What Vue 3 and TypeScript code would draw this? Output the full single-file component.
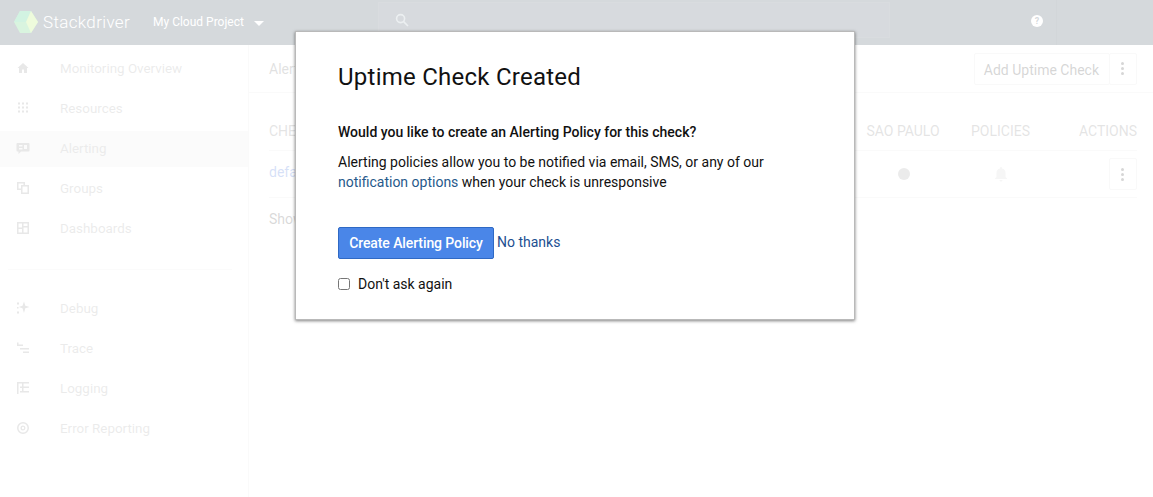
<script setup lang="ts">
import { ref } from 'vue';

const dontAsk = ref(false);

const topNav = [
  { label: 'Monitoring Overview', icon: 'home' },
  { label: 'Resources', icon: 'grid' },
  { label: 'Alerting', icon: 'alert', active: true },
  { label: 'Groups', icon: 'groups' },
  { label: 'Dashboards', icon: 'dash' },
];

const bottomNav = [
  { label: 'Debug', icon: 'debug' },
  { label: 'Trace', icon: 'trace' },
  { label: 'Logging', icon: 'logging' },
  { label: 'Error Reporting', icon: 'error' },
];
</script>

<template>
  <div class="app">
    <header class="topbar">
      <div class="brand">
        <svg class="logo" width="26" height="24" viewBox="0 0 26 24">
          <path d="M7 1h11l7 11-7 11H7L1 12z" fill="#40c860" />
          <path d="M7 1h11L13 12H1z" fill="#20c070" />
          <path d="M18 1l7 11-7 11-5-11z" fill="#a8e850" />
        </svg>
        <span class="brand-name">Stackdriver</span>
      </div>
      <div class="project">
        <span>My Cloud Project</span>
        <i class="caret"></i>
      </div>
      <div class="search">
        <svg width="14" height="14" viewBox="0 0 14 14" fill="none" stroke="#9fb0bb" stroke-width="1.6">
          <circle cx="5.6" cy="5.6" r="4" />
          <path d="M8.6 8.6L13 13" />
        </svg>
      </div>
      <div class="help">?</div>
      <div class="top-sep"></div>
    </header>

    <div class="body">
      <nav class="sidebar">
        <a
          v-for="item in topNav"
          :key="item.label"
          class="nav-item"
          :class="{ active: item.active }"
        >
          <svg class="nav-icon" width="14" height="14" viewBox="0 0 14 14" fill="#8a8a8a">
            <path v-if="item.icon === 'home'" d="M7 2L1.500 7H3v5h3V8.500h2V12h3V7h1.500z" />
            <path v-else-if="item.icon === 'grid'" d="M2 1.500h2v2H2zM6 1.500h2v2H6zM10 1.500h2v2h-2zM2 5.500h2v2H2zM6 5.500h2v2H6zM10 5.500h2v2h-2zM2 9.500h2v2H2zM6 9.500h2v2H6zM10 9.500h2v2h-2z" />
            <path v-else-if="item.icon === 'alert'" d="M1.500 2h11a1 1 0 0 1 1 1v6.500a1 1 0 0 1-1 1H5L2.500 13v-2.500h-1a1 1 0 0 1-1-1V3a1 1 0 0 1 1-1zM3 4v1.500h3.500V4zm5 0v4h3V4zM3 7v1.500h3.500V7z" fill-rule="evenodd" />
            <path v-else-if="item.icon === 'groups'" d="M1 1h8v3h4v9H5V9H1zm1.500 1.500v5H5V4h2.500V2.500zM6.500 5.500v6h5v-6z" fill-rule="evenodd" />
            <path v-else-if="item.icon === 'dash'" d="M1 1h12v12H1zm1.500 1.500v4h3.500v-4zm5 0v2.500h4V2.500zm0 4v5h4v-5zm-5 1.500v3.500h3.500V8z" fill-rule="evenodd" />
          </svg>
          <span>{{ item.label }}</span>
        </a>
        <div class="nav-divider"></div>
        <a v-for="item in bottomNav" :key="item.label" class="nav-item">
          <svg class="nav-icon" width="14" height="14" viewBox="0 0 14 14" fill="#8a8a8a">
            <path v-if="item.icon === 'debug'" d="M8 .5l1.300 4.200L13.500 6 9.300 7.300 8 12 6.500 7.300 2.800 6l3.700-1.300zM1 1.500h2v2H1zM1 6h1.500v1.500H1zM1 10.500h2v2H1z" />
            <path v-else-if="item.icon === 'trace'" d="M1 1.500h1.500V5H1zM1 3.500h6V5H1zM4 7h9v1.500H4zM7 10.500h6V12H7z" />
            <path v-else-if="item.icon === 'logging'" d="M1 1h12v1.500H1zM1 1h1.500v12H1zM4 5.500h9V7H4zM4 10h9v1.500H4zM6 2h1.500v9H6z" />
            <path v-else d="M7 1a6 6 0 1 0 0 12A6 6 0 0 0 7 1zm0 1.500a4.500 4.500 0 1 1 0 9 4.500 4.500 0 0 1 0-9zM7 4.500a2.500 2.500 0 1 0 0 5 2.500 2.500 0 0 0 0-5zm0 1.300a1.200 1.200 0 1 1 0 2.400 1.200 1.200 0 0 1 0-2.400z" fill-rule="evenodd" />
          </svg>
          <span>{{ item.label }}</span>
        </a>
      </nav>

      <main class="content">
        <div class="toolbar">
          <span class="crumb">Alerting</span>
          <div class="toolbar-actions">
            <button class="btn add">Add Uptime Check</button>
            <button class="btn kebab"><i></i><i></i><i></i></button>
          </div>
        </div>

        <div class="table">
          <div class="row head">
            <span class="cell-name">CHECK</span>
            <span class="cell-region">SAO PAULO</span>
            <span class="cell-policy">POLICIES</span>
            <span class="cell-actions">ACTIONS</span>
          </div>
          <div class="row data">
            <a class="cell-name link">default</a>
            <span class="cell-region"><i class="dot"></i></span>
            <span class="cell-policy">
              <svg width="14" height="16" viewBox="0 0 14 16" fill="#cfcfcf">
                <path d="M7 1a1 1 0 0 1 1 1v.600A4.500 4.500 0 0 1 11.500 7v4l1.500 1.500v.500H1v-.500L2.500 11V7A4.500 4.500 0 0 1 6 2.600V2a1 1 0 0 1 1-1zM5.500 14h3a1.500 1.500 0 0 1-3 0z" />
              </svg>
            </span>
            <span class="cell-actions">
              <button class="btn kebab"><i></i><i></i><i></i></button>
            </span>
          </div>
        </div>
        <p class="showing">Showing 1 of 1</p>
      </main>
    </div>

    <div class="overlay">
      <section class="dialog">
        <h2>Uptime Check Created</h2>
        <p class="question">Would you like to create an Alerting Policy for this check?</p>
        <p class="info">
          Alerting policies allow you to be notified via email, SMS, or any of our
          <a class="info-link">notification options</a> when your check is unresponsive
        </p>
        <div class="dialog-actions">
          <button class="primary">Create Alerting Policy</button>
          <a class="decline">No thanks</a>
        </div>
        <label class="dont-ask">
          <input v-model="dontAsk" type="checkbox" />
          <span>Don't ask again</span>
        </label>
      </section>
    </div>
  </div>
</template>

<style>
html,
body {
  margin: 0;
  background: #fff;
}
</style>

<style scoped>
.app {
  position: relative;
  width: 1153px;
  height: 497px;
  overflow: hidden;
  font-family: Roboto, "Liberation Sans", sans-serif;
  color: #333;
}

.topbar {
  display: flex;
  align-items: center;
  height: 45px;
  background: #2d4150;
  color: #fff;
}

.brand {
  display: flex;
  align-items: center;
  width: 153px;
  padding-left: 13px;
  box-sizing: border-box;
}

.logo {
  margin-right: 4px;
  margin-top: -2px;
  flex: none;
}

.brand-name {
  font-size: 17px;
  font-weight: 300;
  letter-spacing: 0.35px;
  margin-top: -2px;
}

.project {
  display: flex;
  align-items: center;
  width: 225px;
  font-size: 12px;
  margin-top: -2px;
}

.caret {
  margin-left: 10px;
  margin-top: 3px;
  border-left: 5px solid transparent;
  border-right: 5px solid transparent;
  border-top: 5px solid #fff;
}

.search {
  display: flex;
  align-items: center;
  width: 512px;
  height: 36px;
  margin-top: -6px;
  padding-left: 16px;
  box-sizing: border-box;
  background: #38495a;
  border: 1px solid #42535f;
}

.help {
  width: 12px;
  height: 12px;
  margin-left: 141px;
  margin-top: -4px;
  border-radius: 50%;
  background: #fff;
  color: #2d4150;
  font-size: 9px;
  font-weight: 700;
  line-height: 12px;
  text-align: center;
}

.top-sep {
  width: 1px;
  height: 45px;
  margin-left: 13px;
  background: #1f3342;
}

.body {
  display: flex;
  height: 452px;
}

.sidebar {
  width: 248px;
  flex: none;
  padding-top: 3px;
  border-right: 1px solid #e4e4e4;
}

.nav-item {
  display: flex;
  align-items: center;
  height: 40px;
  padding-left: 16px;
  color: #9c9c9c;
  font-size: 13.4px;
}

.nav-item.active {
  background: #e8e8e8;
  height: 34px;
  padding-bottom: 2px;
  margin: 3px 0 1px;
}

.nav-icon {
  margin-right: 30px;
  flex: none;
}

.nav-divider {
  height: 1px;
  margin: 21px 16px 18px 8px;
  background: #e8e8e8;
}

.content {
  flex: 1;
  min-width: 0;
  padding: 0 16px 0 20px;
}

.toolbar {
  display: flex;
  align-items: center;
  justify-content: space-between;
  height: 47px;
  margin: 0 -16px 0 -20px;
  padding: 0 16px 0 20px;
  border-bottom: 1px solid #e4e4e4;
}

.crumb {
  color: #6b6b6b;
  font-size: 14px;
}

.toolbar-actions {
  display: flex;
}

.btn {
  height: 32px;
  padding: 0 10px 0 9px;
  border: 1px solid #dedede;
  border-radius: 2px;
  background: #fff;
  color: #333;
  font-family: inherit;
  font-size: 14px;
}

.add {
  padding-top: 2px;
}

.kebab {
  display: flex;
  flex-direction: column;
  align-items: center;
  justify-content: center;
  gap: 2px;
  width: 28px;
  padding: 0 1px 0 0;
  margin-left: -1px;
}

.kebab i {
  width: 3px;
  height: 3px;
  background: #333;
  border-radius: 50%;
}

.table {
  margin-top: 19px;
}

.row {
  display: flex;
  align-items: center;
  border-bottom: 1px solid #e4e4e4;
}

.head {
  height: 38px;
  color: #7a7a7a;
  font-size: 14px;
}

.data {
  height: 46px;
  font-size: 14px;
}

.cell-name {
  width: 597px;
}

.cell-region {
  display: flex;
  justify-content: center;
  width: 74px;
}

.cell-policy {
  display: flex;
  justify-content: center;
  width: 61px;
  margin-left: 30px;
}

.cell-actions {
  display: flex;
  justify-content: flex-end;
  margin-left: auto;
}

.link {
  color: #3367d6;
  margin-top: -4px;
}

.dot {
  width: 12px;
  height: 12px;
  margin-left: 2px;
  border-radius: 50%;
  background: #9a9a9a;
}

.showing {
  margin: 13px 0 0;
  color: #444;
  font-size: 14px;
}

.overlay {
  position: absolute;
  inset: 0;
  padding: 31px 0 0 295px;
  background: rgba(255, 255, 255, 0.8);
}

.dialog {
  width: 560px;
  height: 289px;
  box-sizing: border-box;
  padding: 28px 42px 0;
  background: #fff;
  border: 1px solid #b9b9b9;
  box-shadow: 0 1px 3px rgba(0, 0, 0, 0.5);
  color: #111;
}

h2 {
  margin: 0;
  font-size: 24px;
  font-weight: 400;
  line-height: 34px;
  letter-spacing: 0.25px;
  color: #111;
}

.question {
  margin: 28px 0 0;
  font-size: 14px;
  font-weight: 500;
  line-height: 20px;
}

.info {
  margin: 10px 0 0;
  font-size: 14px;
  line-height: 20px;
}

.info-link {
  color: #27598b;
}

.dialog-actions {
  display: flex;
  align-items: center;
  margin-top: 35px;
}

.primary {
  height: 32px;
  width: 156px;
  padding: 0;
  border: 1px solid #2f69c4;
  border-radius: 2px;
  background: #4a86e8;
  color: #fff;
  font-family: inherit;
  font-size: 14px;
  font-weight: 500;
  letter-spacing: -0.1px;
}

.decline {
  margin: -2px 0 0 3px;
  color: #1d4f91;
  font-size: 14px;
}

.dont-ask {
  display: flex;
  align-items: center;
  margin-top: 17px;
  font-size: 14px;
}

.dont-ask input {
  width: 12px;
  height: 12px;
  margin: 0 8px 0 0;
}
</style>
